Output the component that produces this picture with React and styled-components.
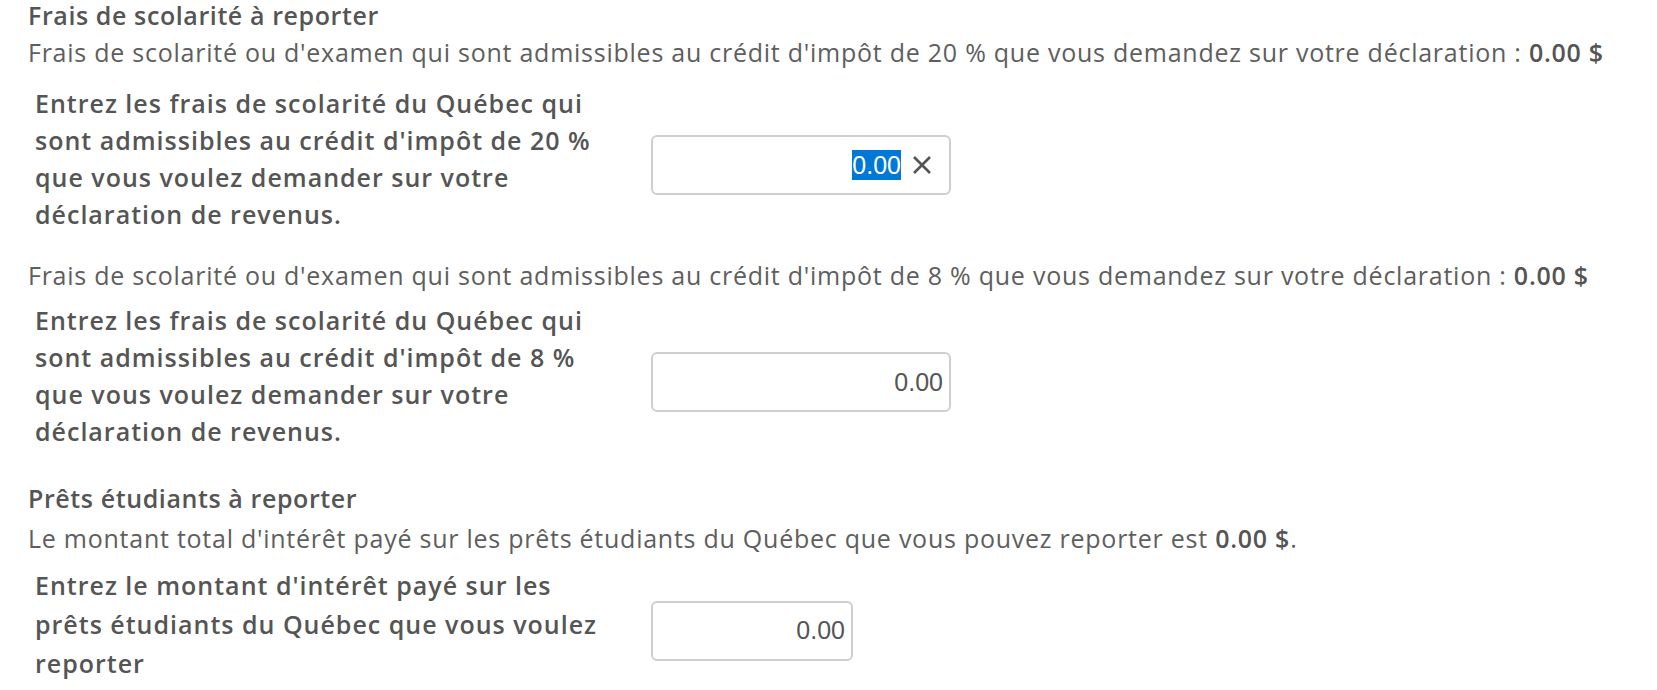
import styled, { createGlobalStyle } from "styled-components";

const GlobalStyle = createGlobalStyle`
  html, body {
    margin: 0;
    padding: 0;
    background: #fff;
  }
  body {
    font-family: "Open Sans", Lato, sans-serif;
    color: #5e5e5e;
  }
`;

const Page = styled.div`
  padding: 0 0 0 28px;
`;

const Section = styled.section`
  margin-top: ${(p) => p.$top || 0}px;
`;

const Heading = styled.h3`
  margin: 0;
  font-size: 25px;
  line-height: 30px;
  font-weight: 600;
  letter-spacing: 0.6px;
  color: #555;
`;

const Description = styled.p`
  margin: ${(p) => p.$top || 4}px 0 0;
  font-size: 25px;
  line-height: 36px;
  letter-spacing: 0.75px;
  color: #5e5e5e;

  & b {
    font-weight: 600;
    color: #555;
  }
`;

const Row = styled.div`
  display: flex;
  align-items: center;
  margin-top: ${(p) => p.$top || 15}px;
`;

const Label = styled.label`
  width: 623px;
  box-sizing: border-box;
  padding: 0 27px 0 7px;
  font-size: 25px;
  line-height: ${(p) => p.$lh || 37}px;
  font-weight: 600;
  letter-spacing: 1px;
  color: #555;
`;

const Field = styled.div`
  box-sizing: border-box;
  width: ${(p) => p.$width}px;
  height: 60px;
  margin-top: 12px;
  border: 2px solid #cfcfcf;
  border-radius: 6px;
  display: flex;
  align-items: center;
  justify-content: flex-end;
  padding: 0 ${(p) => (p.$clear ? 17 : 6)}px 0 10px;
  font-family: "Liberation Sans", Arial, sans-serif;
  font-size: 25px;
  color: #555;
  background: #fff;
`;

const Selected = styled.span`
  background: #0078d7;
  color: #fff;
  line-height: 30px;
`;

const ClearButton = styled.span`
  display: inline-flex;
  margin-left: 11px;
  width: 20px;
  height: 20px;
`;

const ClearIcon = () => (
  <svg width="20" height="20" viewBox="0 0 20 20">
    <path d="M2 2 L18 18 M18 2 L2 18" stroke="#555" strokeWidth="2.6" fill="none" />
  </svg>
);

const App = () => {
  return (
    <Page>
      <GlobalStyle />
      <Section>
        <Heading>Frais de scolarité à reporter</Heading>
        <Description>
          Frais de scolarité ou d'examen qui sont admissibles au crédit d'impôt de 20 % que vous demandez sur votre déclaration : <b>0.00 $</b>
        </Description>
        <Row>
          <Label>
            Entrez les frais de scolarité du Québec qui sont admissibles au crédit d'impôt de 20 % que vous voulez demander sur votre déclaration de revenus.
          </Label>
          <Field $width={300} $clear>
            <Selected>0.00</Selected>
            <ClearButton>
              <ClearIcon />
            </ClearButton>
          </Field>
        </Row>
        <Description $top={24}>
          Frais de scolarité ou d'examen qui sont admissibles au crédit d'impôt de 8 % que vous demandez sur votre déclaration : <b>0.00 $</b>
        </Description>
        <Row $top={9}>
          <Label>
            Entrez les frais de scolarité du Québec qui sont admissibles au crédit d'impôt de 8 % que vous voulez demander sur votre déclaration de revenus.
          </Label>
          <Field $width={300}>0.00</Field>
        </Row>
      </Section>
      <Section $top={33}>
        <Heading>Prêts étudiants à reporter</Heading>
        <Description $top={7}>
          Le montant total d'intérêt payé sur les prêts étudiants du Québec que vous pouvez reporter est <b>0.00 $</b>.
        </Description>
        <Row $top={10}>
          <Label $lh={39}>
            Entrez le montant d'intérêt payé sur les prêts étudiants du Québec que vous voulez reporter
          </Label>
          <Field $width={202}>0.00</Field>
        </Row>
      </Section>
    </Page>
  );
};

export default App;
